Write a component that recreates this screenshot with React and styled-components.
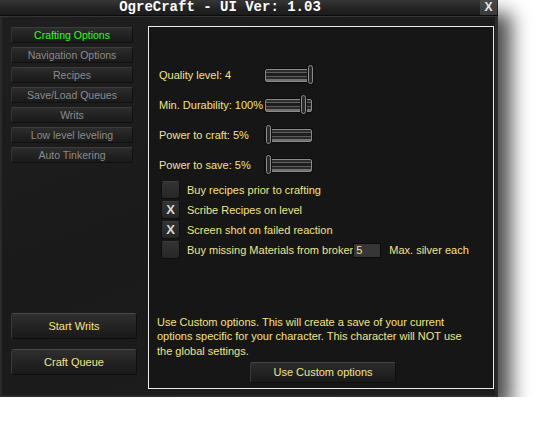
import React from 'react';
import styled, { createGlobalStyle } from 'styled-components';

const GlobalStyle = createGlobalStyle`
    body {
        margin: 0;
        background: #ffffff;
        font-family: "Liberation Sans", Arial, sans-serif;
    }
`;

const Window = styled.div`
    width: 498px;
    height: 397px;
    box-sizing: border-box;
    display: flex;
    flex-direction: column;
    background: linear-gradient(160deg, #1f1f1f 0%, #1a1a1a 50%, #1d1d1d 100%);
    border-left: 2px solid #2a2a2a;
    border-right: 3px solid #2c2c2c;
    border-bottom: 2px solid #2a2a2a;
    box-shadow: 13px 13px 18px rgba(0, 0, 0, 0.7);
`;

const TitleBar = styled.div`
    height: 15px;
    display: flex;
    align-items: stretch;
    background: linear-gradient(#363636, #222222 60%, #1b1b1b);
    border-bottom: 1px solid #0a0a0a;
    box-shadow: 0 1px 0 #353535;
    margin-left: -2px;
    margin-right: -3px;
`;

const Title = styled.div`
    flex: 1;
    padding-right: 40px;
    text-align: center;
    color: #ffffff;
    font-family: "Liberation Mono", "Courier New", monospace;
    font-weight: bold;
    font-size: 14px;
    line-height: 15px;
`;

const CloseButton = styled.div`
    width: 17px;
    margin-right: 1px;
    background: linear-gradient(#4a4a4a, #3a3a3a);
    color: #e8e8e8;
    font-weight: bold;
    font-size: 12px;
    line-height: 15px;
    text-align: center;
`;

const Body = styled.div`
    flex: 1;
    display: flex;
    padding: 9px 1px 6px 0;
    margin-top: 1px;
`;

const Sidebar = styled.div`
    width: 137px;
    padding: 1px 0 14px 9px;
    display: flex;
    flex-direction: column;
    justify-content: space-between;
`;

const NavList = styled.div`
    display: flex;
    flex-direction: column;
    gap: 4px;
`;

const NavButton = styled.div`
    width: 122px;
    height: 16px;
    box-sizing: border-box;
    border: 1px solid #101010;
    border-top-color: #3c3c3c;
    border-left-color: #333333;
    border-radius: 2px;
    background: linear-gradient(#2d2d2d, #222222 50%, #1a1a1a);
    color: ${(props) => (props.$active ? '#2cff1e' : '#8c8c8c')};
    font-size: 10.5px;
    line-height: 14px;
    text-align: center;
`;

const ActionList = styled.div`
    display: flex;
    flex-direction: column;
    gap: 10px;
`;

const ActionButton = styled.div`
    width: 126px;
    height: 26px;
    box-sizing: border-box;
    border: 1px solid #0e0e0e;
    border-top-color: #4a4a4a;
    border-left-color: #3a3a3a;
    border-radius: 3px;
    background: linear-gradient(#2f2f2f, #232323 50%, #191919);
    color: #f3e38a;
    font-size: 11px;
    line-height: 24px;
    text-align: center;
`;

const Panel = styled.div`
    flex: 1;
    display: flex;
    flex-direction: column;
    border: 1px solid #ececec;
    background: #161616;
    padding: 38px 0 5px 0;
    color: #f3e38a;
    font-size: 11px;
`;

const SliderList = styled.div`
    display: flex;
    flex-direction: column;
    gap: 10px;
    padding-left: 10px;
`;

const SliderRow = styled.div`
    height: 20px;
    display: flex;
    align-items: center;
`;

const SliderLabel = styled.div`
    width: 106px;
    white-space: nowrap;
`;

const Track = styled.div`
    position: relative;
    width: 47px;
    height: 13px;
    box-sizing: border-box;
    border: 1px solid #8a8a8a;
    border-radius: 2px;
    box-shadow: 0 0 0 1px #0c0c0c;
    background: linear-gradient(
        #2e2e2e 0, #2e2e2e 2px,
        #606060 2px, #606060 3px,
        #1e1e1e 3px, #1e1e1e 6px,
        #5a5a5a 6px, #5a5a5a 7px,
        #2a2a2a 7px, #2a2a2a 9px,
        #707070 9px, #707070 11px
    );
`;

const Handle = styled.div`
    position: absolute;
    top: -5px;
    width: 5px;
    height: 19px;
    box-sizing: border-box;
    border: 1px solid #8c8c8c;
    border-radius: 3px;
    box-shadow: 0 0 0 1px #111111;
    background: #2a2a2a;
`;

const CheckList = styled.div`
    display: flex;
    flex-direction: column;
    gap: 2px;
    margin-top: 6px;
    padding-left: 12px;
`;

const CheckRow = styled.div`
    height: 18px;
    display: flex;
    align-items: center;
`;

const CheckBox = styled.div`
    width: 19px;
    height: 18px;
    box-sizing: border-box;
    margin-right: 7px;
    border: 1px solid #0e0e0e;
    border-top-color: #3e3e3e;
    border-radius: 3px;
    background: linear-gradient(#333333, #272727);
    color: #d8d8d8;
    font-weight: bold;
    font-size: 13px;
    line-height: 16px;
    text-align: center;
`;

const CheckLabel = styled.div`
    white-space: nowrap;
`;

const SmallInput = styled.div`
    width: 28px;
    height: 15px;
    box-sizing: border-box;
    margin-left: 0;
    border: 1px solid #0a0a0a;
    background: #363636;
    color: #f3e38a;
    line-height: 13px;
    padding-left: 2px;
`;

const InputSuffix = styled.div`
    margin-left: 8px;
`;

const Spacer = styled.div`
    flex: 1;
`;

const Notice = styled.p`
    margin: 0 0 4px 8px;
    width: 312px;
    line-height: 14.5px;
`;

const CustomButton = styled.div`
    align-self: center;
    width: 146px;
    height: 21px;
    box-sizing: border-box;
    margin-left: 4px;
    border: 1px solid #0e0e0e;
    border-top-color: #444444;
    border-left-color: #383838;
    border-radius: 2px;
    background: linear-gradient(#2d2d2d, #222222 50%, #191919);
    color: #f3e38a;
    line-height: 19px;
    text-align: center;
`;

const navItems = [
    'Crafting Options',
    'Navigation Options',
    'Recipes',
    'Save/Load Queues',
    'Writs',
    'Low level leveling',
    'Auto Tinkering',
];

const sliders = [
    { label: 'Quality level: 4', pos: 42 },
    { label: 'Min. Durability: 100%', pos: 35 },
    { label: 'Power to craft: 5%', pos: 0 },
    { label: 'Power to save: 5%', pos: 0 },
];

const checks = [
    { label: 'Buy recipes prior to crafting', checked: false },
    { label: 'Scribe Recipes on level', checked: true },
    { label: 'Screen shot on failed reaction', checked: true },
];

function App() {
    return (
        <>
            <GlobalStyle />
            <Window>
                <TitleBar>
                    <Title>OgreCraft - UI Ver: 1.03</Title>
                    <CloseButton>X</CloseButton>
                </TitleBar>
                <Body>
                    <Sidebar>
                        <NavList>
                            {navItems.map((item, i) => (
                                <NavButton key={item} $active={i === 0}>{item}</NavButton>
                            ))}
                        </NavList>
                        <ActionList>
                            <ActionButton>Start Writs</ActionButton>
                            <ActionButton>Craft Queue</ActionButton>
                        </ActionList>
                    </Sidebar>
                    <Panel>
                        <SliderList>
                            {sliders.map((s) => (
                                <SliderRow key={s.label}>
                                    <SliderLabel>{s.label}</SliderLabel>
                                    <Track>
                                        <Handle style={{ left: s.pos }} />
                                    </Track>
                                </SliderRow>
                            ))}
                        </SliderList>
                        <CheckList>
                            {checks.map((c) => (
                                <CheckRow key={c.label}>
                                    <CheckBox>{c.checked ? 'X' : ''}</CheckBox>
                                    <CheckLabel>{c.label}</CheckLabel>
                                </CheckRow>
                            ))}
                            <CheckRow>
                                <CheckBox />
                                <CheckLabel>Buy missing Materials from broker</CheckLabel>
                                <SmallInput>5</SmallInput>
                                <InputSuffix>Max. silver each</InputSuffix>
                            </CheckRow>
                        </CheckList>
                        <Spacer />
                        <Notice>
                            Use Custom options. This will create a save of your current options specific for your character. This character will NOT use the global settings.
                        </Notice>
                        <CustomButton>Use Custom options</CustomButton>
                    </Panel>
                </Body>
            </Window>
        </>
    );
}

export default App;
